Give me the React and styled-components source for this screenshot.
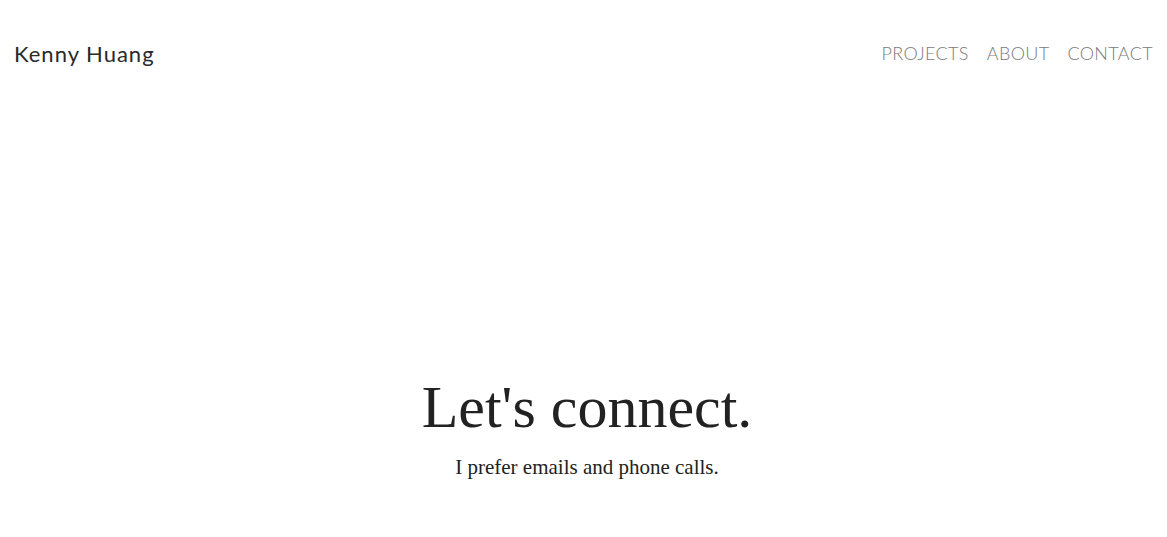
import React from 'react';
import styled, { createGlobalStyle } from 'styled-components';

const Global = createGlobalStyle`
  html, body { margin: 0; padding: 0; background: #fff; }
  body { font-family: "Lato", "Open Sans", sans-serif; }
`;

const Page = styled.div`
  height: 537px;
  display: flex;
  flex-direction: column;
`;

const Header = styled.header`
  display: flex;
  justify-content: space-between;
  align-items: center;
  padding: 38px 14px 0 14px;
  height: 30px;
`;

const Brand = styled.a`
  font-family: "Lato", sans-serif;
  font-weight: 400;
  font-size: 22px;
  letter-spacing: 1px;
  color: #2a2a2a;
  text-decoration: none;
`;

const Nav = styled.nav`
  display: flex;
  gap: 18px;
`;

const NavLink = styled.a`
  font-family: "Lato", sans-serif;
  font-weight: 300;
  font-size: 18px;
  color: #7a7a7a;
  text-decoration: none;
  letter-spacing: 0.35px;
`;

const Hero = styled.section`
  flex: 1;
  display: flex;
  flex-direction: column;
  align-items: center;
  justify-content: flex-end;
  padding: 0 0 57px 7px;
`;

const Title = styled.h1`
  margin: 0;
  font-family: "Liberation Serif", serif;
  font-weight: 400;
  font-size: 60px;
  line-height: 1;
  color: #222;
`;

const Sub = styled.p`
  margin: 18px 0 0;
  font-family: "Liberation Serif", serif;
  font-size: 21px;
  color: #222;
`;

const App = () => {
  return (
    <Page>
      <Global />
      <Header>
        <Brand href="#">Kenny Huang</Brand>
        <Nav>
          <NavLink href="#">PROJECTS</NavLink>
          <NavLink href="#">ABOUT</NavLink>
          <NavLink href="#">CONTACT</NavLink>
        </Nav>
      </Header>
      <Hero>
        <Title>Let's connect.</Title>
        <Sub>I prefer emails and phone calls.</Sub>
      </Hero>
    </Page>
  );
};

export default App;
